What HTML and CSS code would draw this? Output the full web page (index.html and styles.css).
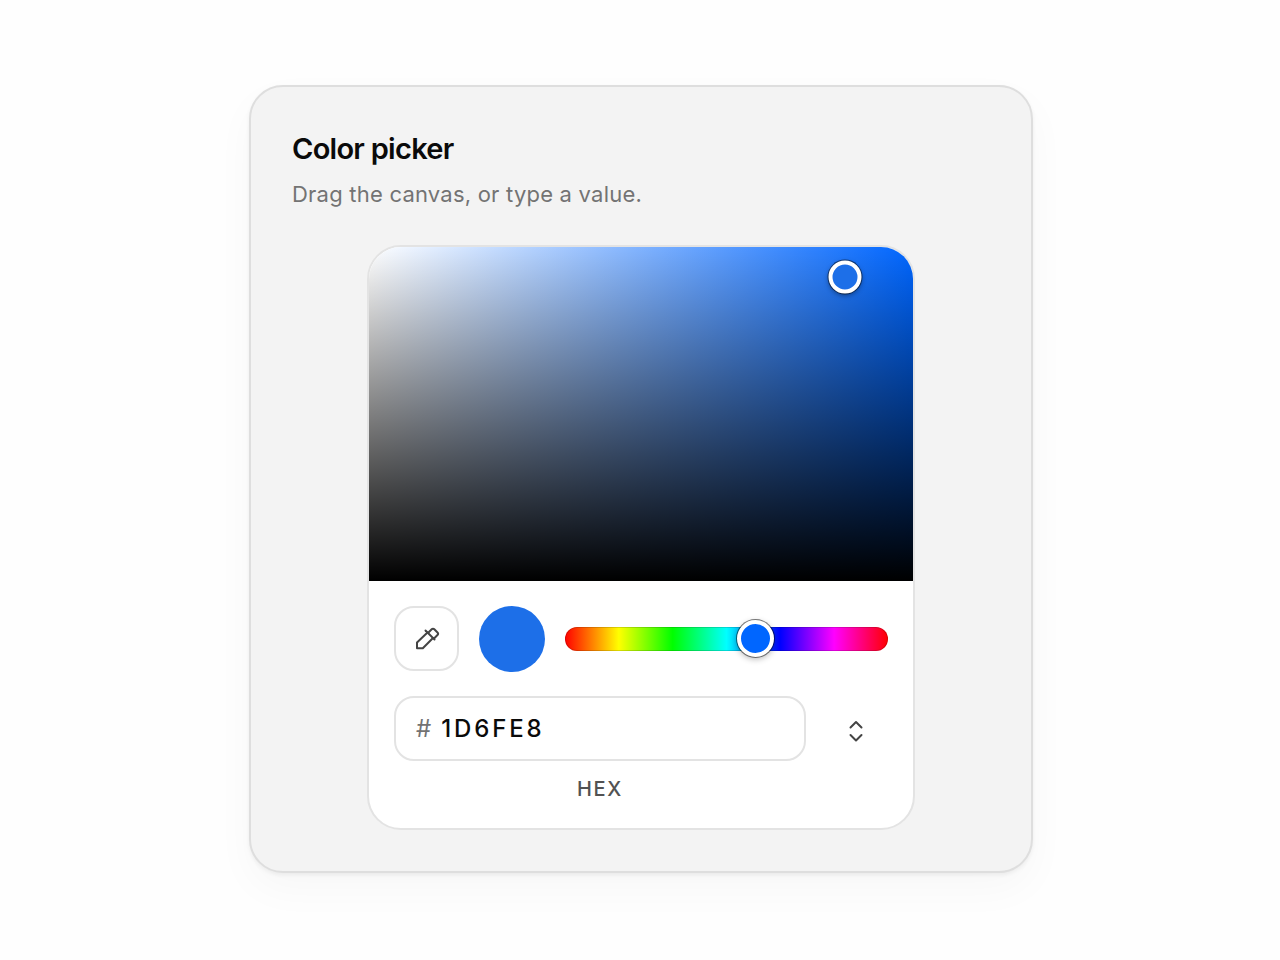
FILE: index.html
```html
<!DOCTYPE html>
<html lang="en">
<head>
    <meta charset="UTF-8">
    <meta name="viewport" content="width=device-width, initial-scale=1.0">
    <title>Color picker</title>
    <link rel="stylesheet" href="styles.css">
</head>

<body>
    <main class="card">
        <h1 class="title">Color picker</h1>
        <p class="subtitle">Drag the canvas, or type a value.</p>

        <div class="picker">
            <div class="canvas">
                <span class="canvas-thumb"></span>
            </div>
            <div class="controls">
                <div class="row">
                    <button class="eyedropper" type="button" aria-label="Pick from screen">
                        <svg viewBox="0 0 26 26" width="26" height="26">
                            <path d="M13.500 6.500 3 16.500V22.200H8.800L19 12"/>
                            <path d="m11.500 4.500 9 9"/>
                            <path d="m14.500 6.500 3.200-3.300a1.800 1.800 0 0 1 2.600 0l3.200 3.300a1.800 1.800 0 0 1 0 2.500l-3.500 3.500"/>
                        </svg>
                    </button>
                    <span class="swatch"></span>
                    <input class="hue" type="range" min="0" max="360" value="216" aria-label="Hue">
                </div>
                <div class="row format">
                    <div class="value">
                        <div class="field">
                            <span class="prefix">#</span>
                            <input class="hex" id="hex" type="text" value="1D6FE8" maxlength="6" spellcheck="false">
                        </div>
                        <label class="label" for="hex">HEX</label>
                    </div>
                    <button class="switch" type="button" aria-label="Change format">
                        <svg viewBox="0 0 26 26" width="26" height="26">
                            <path d="m8.500 9.500 5.500-5.500 5.500 5.500"/>
                            <path d="m8.500 17 5.500 5.500 5.500-5.500"/>
                        </svg>
                    </button>
                </div>
            </div>
        </div>
    </main>
</body>

</html>
```

FILE: styles.css
```css
* {
    margin: 0;
    padding: 0;
    box-sizing: border-box;
    font-family: Inter, sans-serif;
}

body {
    background: #fefefe;
    color: #0a0a0a;
    display: flex;
    align-items: center;
    justify-content: center;
    min-height: 100vh;
    padding: 0 0 2px 2px;
}

.card {
    width: 100%;
    max-width: 784px;
    padding: 41px;
    background: #f3f3f3;
    border: 2px solid #dedede;
    border-radius: 34px;
    box-shadow: 0 2px 4px rgba(0, 0, 0, 0.06), 0 16px 40px rgba(0, 0, 0, 0.03);
}

.title {
    font-size: 29px;
    font-weight: 600;
    line-height: 42px;
    letter-spacing: -0.025em;
}

.subtitle {
    margin-top: 6px;
    font-size: 22px;
    line-height: 36px;
    letter-spacing: 0.01em;
    color: #737373;
}

.picker {
    max-width: 548px;
    margin: 33px auto 0;
    background: white;
    border: 2px solid #e3e3e3;
    border-radius: 34px;
    overflow: hidden;
}

.canvas {
    position: relative;
    height: 334px;
    background: linear-gradient(to top, #000, transparent), linear-gradient(to right, #fff, #0066ff);
}

.canvas-thumb {
    position: absolute;
    left: 87.5%;
    top: 9%;
    width: 33px;
    height: 33px;
    border: 4px solid white;
    border-radius: 50%;
    background: #1d6fe8;
    box-shadow: 0 0 0 1px rgba(0, 0, 0, 0.5), 0 2px 5px rgba(0, 0, 0, 0.4);
    transform: translate(-50%, -50%);
}

.controls {
    display: flex;
    flex-direction: column;
    gap: 25px;
    padding: 25px 25px 27px;
}

.row {
    display: flex;
    align-items: center;
    gap: 20px;
}

.eyedropper {
    display: flex;
    align-items: center;
    justify-content: center;
    width: 65px;
    height: 65px;
    background: white;
    border: 2px solid #e3e3e3;
    border-radius: 20px;
    cursor: pointer;
}

svg {
    fill: none;
    stroke: #444;
    stroke-width: 2;
    stroke-linecap: round;
    stroke-linejoin: round;
}

.swatch {
    width: 66px;
    height: 66px;
    margin: -1px 0;
    border-radius: 50%;
    background: #1d6fe8;
}

.hue {
    flex: 1;
    min-width: 0;
    height: 24px;
    appearance: none;
    border-radius: 12px;
    background: linear-gradient(to right, #f00, #ff0, #0f0, #0ff, #00f, #f0f, #f00);
    box-shadow: inset 0 0 0 1px rgba(0, 0, 0, 0.15);
    cursor: pointer;
}

.hue::-webkit-slider-thumb {
    appearance: none;
    width: 37px;
    height: 37px;
    border: 4px solid white;
    border-radius: 50%;
    background: #0066ff;
    box-shadow: 0 0 0 1px rgba(0, 0, 0, 0.5), 0 2px 6px rgba(0, 0, 0, 0.3);
}

.format {
    align-items: flex-start;
    gap: 16px;
}

.value {
    flex: 1;
    min-width: 0;
    display: flex;
    flex-direction: column;
    gap: 16px;
}

.field {
    display: flex;
    align-items: center;
    gap: 10px;
    height: 65px;
    padding: 0 20px;
    border: 2px solid #e3e3e3;
    border-radius: 20px;
    font-size: 24px;
}

.prefix {
    color: #737373;
}

.hex {
    flex: 1;
    min-width: 0;
    border: none;
    outline: none;
    background: none;
    color: #0a0a0a;
    font-size: 24px;
    font-weight: 500;
    letter-spacing: 0.12em;
}

.label {
    font-size: 20px;
    font-weight: 500;
    line-height: 24px;
    letter-spacing: 0.08em;
    text-align: center;
    color: #525252;
}

.switch {
    display: flex;
    align-items: center;
    justify-content: center;
    width: 66px;
    height: 70px;
    border: none;
    background: none;
    cursor: pointer;
}
```
